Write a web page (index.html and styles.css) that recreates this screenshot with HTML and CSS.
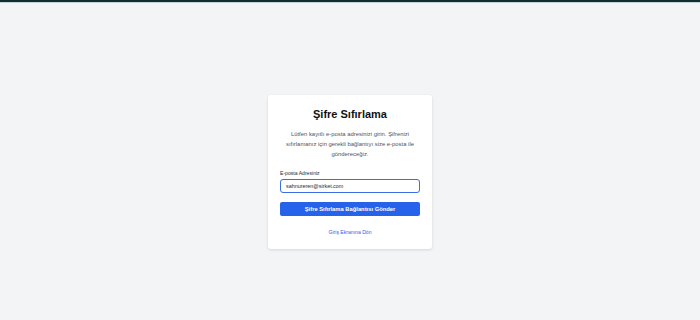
FILE: index.html
```html
<!DOCTYPE html>
<html lang="tr">

<head>
    <meta charset="UTF-8">
    <meta name="viewport" content="width=device-width, initial-scale=1.0">
    <title>Şifre Sıfırlama</title>
    <link rel="stylesheet" href="styles.css">
</head>

<body>
    <div class="topbar"></div>
    <div class="page">
        <form action="" id="ResetForm" class="card">
            <h1>Şifre Sıfırlama</h1>
            <p class="info">Lütfen kayıtlı e-posta adresinizi girin. Şifrenizi sıfırlamanız için gerekli bağlantıyı size e-posta ile göndereceğiz.</p>

            <label for="Email">E-posta Adresiniz</label>
            <input type="email" id="Email" name="Email" value="sahnureren@sirket.com">

            <button type="submit" class="sendbtn">Şifre Sıfırlama Bağlantısı Gönder</button>

            <a href="#" class="backlink">Giriş Ekranına Dön</a>
        </form>
    </div>
</body>

</html>
```

FILE: styles.css
```css
body {
    font-family: "Liberation Sans", Arial, sans-serif;
    background-color: #f3f4f6;
    margin: 0;
    height: 320px;
    overflow: hidden;
}

.topbar {
    height: 2px;
    background-color: #0f2c2f;
    border-bottom: 1px solid #c9d3d4;
}

.page {
    display: flex;
    justify-content: center;
    padding-top: 92px;
}

.card {
    background-color: #ffffff;
    width: 140px;
    padding: 10px 12px 13px;
    border-radius: 3px;
    box-shadow: 0px 1px 3px rgba(0, 0, 0, 0.12);
    display: flex;
    flex-direction: column;
}

h1 {
    font-size: 11px;
    font-weight: bold;
    color: #111111;
    text-align: center;
    margin: 0;
    line-height: 18px;
}

.info {
    font-size: 5.9px;
    line-height: 9.8px;
    color: #4b5563;
    text-align: center;
    margin: 7px 0 11px;
}

label {
    font-size: 5.1px;
    color: #1f2937;
    line-height: 7px;
    margin-bottom: 2px;
}

input {
    box-sizing: border-box;
    width: 100%;
    height: 14px;
    padding: 0 5px;
    border: 1px solid #3b6fe0;
    border-radius: 3px;
    font-family: "Liberation Sans", Arial, sans-serif;
    font-size: 5.4px;
    color: #1f2937;
    outline: none;
}

.sendbtn {
    background-color: #2563eb;
    color: white;
    height: 14px;
    margin-top: 9px;
    border: none;
    border-radius: 2px;
    width: 100%;
    font-family: "Liberation Sans", Arial, sans-serif;
    font-size: 5.8px;
    font-weight: bold;
    padding: 0;
}

.backlink {
    display: block;
    text-align: center;
    margin-top: 13px;
    font-size: 5.1px;
    line-height: 7px;
    color: #2f5ee8;
    text-decoration: none;
}
```
